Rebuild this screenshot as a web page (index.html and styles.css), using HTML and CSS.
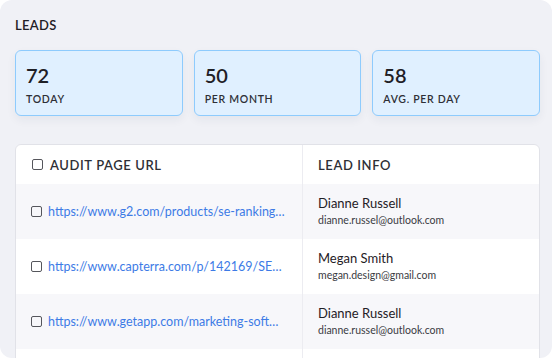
FILE: index.html
```html
<!DOCTYPE html>
<html lang="en">
<head>
  <meta charset="UTF-8">
  <title>Leads</title>
  <link rel="stylesheet" href="styles.css">
</head>
<body>
  <div class="panel">
    <h2 class="panel-title">Leads</h2>

    <div class="stats">
      <div class="stat">
        <div class="stat-value">72</div>
        <div class="stat-label">Today</div>
      </div>
      <div class="stat">
        <div class="stat-value">50</div>
        <div class="stat-label">Per month</div>
      </div>
      <div class="stat">
        <div class="stat-value">58</div>
        <div class="stat-label">Avg. per day</div>
      </div>
    </div>

    <div class="leads-table">
      <div class="row head">
        <div class="cell url-cell"><span class="check"></span>Audit page URL</div>
        <div class="cell info-cell">Lead info</div>
      </div>
      <div class="row shaded">
        <div class="cell url-cell"><span class="check"></span><a href="#">https://www.g2.com/products/se-ranking/reviews</a></div>
        <div class="cell info-cell">
          <div class="lead-name">Dianne Russell</div>
          <div class="lead-mail">dianne.russel@outlook.com</div>
        </div>
      </div>
      <div class="row">
        <div class="cell url-cell"><span class="check"></span><a href="#">https://www.capterra.com/p/142169/SE-Ranking/</a></div>
        <div class="cell info-cell">
          <div class="lead-name">Megan Smith</div>
          <div class="lead-mail">megan.design@gmail.com</div>
        </div>
      </div>
      <div class="row shaded">
        <div class="cell url-cell"><span class="check"></span><a href="#">https://www.getapp.com/marketing-software/a/se-ranking/</a></div>
        <div class="cell info-cell">
          <div class="lead-name">Dianne Russell</div>
          <div class="lead-mail">dianne.russel@outlook.com</div>
        </div>
      </div>
      <div class="row">
        <div class="cell url-cell"><span class="check"></span><a href="#">https://www.trustradius.com/products/se-ranking</a></div>
        <div class="cell info-cell">
          <div class="lead-name">Megan Smith</div>
          <div class="lead-mail">megan.design@gmail.com</div>
        </div>
      </div>
    </div>
  </div>
</body>
</html>
```

FILE: styles.css
```css
body {
  margin: 0;
  background-color: #ffffff;
  font-family: Lato, "Open Sans", sans-serif;
}

.panel {
  width: 552px;
  height: 358px;
  box-sizing: border-box;
  padding: 15px 12px 0 15px;
  background-color: #f0f1f6;
  border-radius: 12px;
  overflow: hidden;
}

.panel-title {
  margin: 2px 0 0;
  font-size: 13px;
  font-weight: 600;
  color: #1f2026;
  text-transform: uppercase;
  letter-spacing: 0.3px;
  line-height: 16px;
}

.stats {
  display: grid;
  grid-template-columns: repeat(3, 1fr);
  gap: 11px;
  margin-top: 17px;
}

.stat {
  height: 66px;
  box-sizing: border-box;
  padding: 12px 10px 0 10px;
  background-color: #e0f0ff;
  border: 1.5px solid #8ecbfd;
  border-radius: 6px;
  box-shadow: 0 4px 10px rgba(40, 50, 90, 0.06);
}

.stat-value {
  font-size: 20px;
  font-weight: 600;
  color: #1f2026;
  line-height: 24px;
}

.stat-label {
  margin-top: 6px;
  font-size: 10.5px;
  font-weight: 600;
  color: #2e2f36;
  text-transform: uppercase;
  letter-spacing: 0.7px;
}

.leads-table {
  margin-top: 28px;
  background-color: #ffffff;
  border: 1px solid #e1e2e8;
  border-radius: 6px;
  overflow: hidden;
}

.row {
  display: grid;
  grid-template-columns: 287px 1fr;
  height: 55px;
}

.row.head {
  height: 39px;
}

.row.shaded {
  background-color: #f7f7fa;
}

.cell {
  display: flex;
  align-items: center;
  min-width: 0;
}

.url-cell {
  padding: 0 16px 0 15px;
  border-right: 1px solid #ececf1;
}

.info-cell {
  flex-direction: column;
  align-items: flex-start;
  justify-content: center;
  padding-left: 15px;
}

.head .cell {
  font-size: 13px;
  font-weight: 600;
  color: #2e2f36;
  text-transform: uppercase;
  letter-spacing: 0.6px;
}

.head .url-cell {
  padding-left: 16px;
}

.head .url-cell .check {
  margin-right: 7px;
}

.check {
  flex: none;
  width: 9px;
  height: 9px;
  border: 1.5px solid #55565c;
  border-radius: 2px;
  margin-right: 6px;
}

.url-cell a {
  font-size: 12.5px;
  color: #3d7be6;
  text-decoration: none;
  white-space: nowrap;
  overflow: hidden;
  text-overflow: ellipsis;
}

.lead-name {
  font-size: 13px;
  color: #1f2026;
  line-height: 17px;
}

.lead-mail {
  margin-top: 1px;
  font-size: 10.5px;
  color: #3a3b42;
  line-height: 15px;
}
```
